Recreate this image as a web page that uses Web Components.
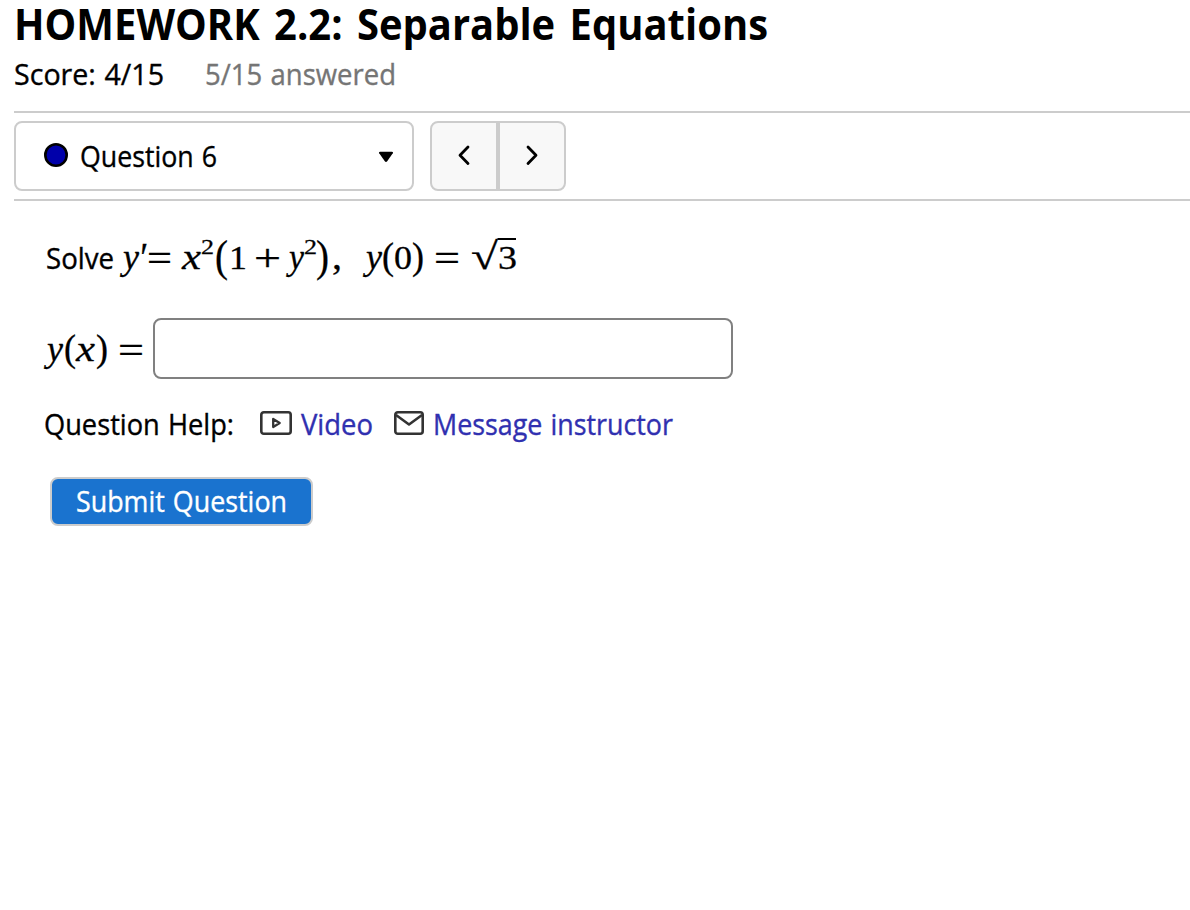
<!DOCTYPE html>
<html lang="en">
<head>
<meta charset="utf-8">
<title>HOMEWORK 2.2: Separable Equations</title>
<style>
	html, body {
		margin: 0;
		background: #fff;
	}
	body {
		font-family: "Trebuchet MS", "Open Sans", sans-serif;
		font-size: 28.5px;
		color: #000;
	}
</style>
</head>
<body>
<homework-page></homework-page>

<script>
// Text set to a given width
class FitText extends HTMLElement {
	constructor() {
		super();
		const shadow = this.attachShadow({ mode: 'open' });
		shadow.innerHTML = `
			<style>
				:host {
					display: block;
					white-space: nowrap;
					line-height: 36px;
					word-spacing: .04em;
					-webkit-text-stroke: .35px currentColor;
				}
				span { display: inline-block; transform-origin: 0 50%; }
			</style>
			<span><slot></slot></span>
		`;
		this.textElement = shadow.querySelector('span');
	}

	connectedCallback() {
		const width = Number(this.getAttribute('width'));
		this.style.width = width + 'px';
		const natural = this.textElement.getBoundingClientRect().width;
		this.textElement.style.transform = `translateY(.3px) scaleX(${width / natural})`;
	}
}


// Score line and title
class HomeworkHeader extends HTMLElement {
	constructor() {
		super();
		const shadow = this.attachShadow({ mode: 'open' });
		shadow.innerHTML = `
			<style>
				:host { display: block; height: 111px; border-bottom: 2px solid #ccc; }
				h1 { margin: 0; height: 47px; font-size: 42.5px; font-weight: 700; }
				h1 fit-text { line-height: 47px; word-spacing: .1em; -webkit-text-stroke: 0; }
				.score { display: flex; gap: 41px; margin-top: 9px; }
				.answered { color: #757575; }
			</style>
			<h1><fit-text width="754">HOMEWORK 2.2: Separable Equations</fit-text></h1>
			<div class="score">
				<fit-text width="150">Score: 4/15</fit-text>
				<fit-text class="answered" width="191">5/15 answered</fit-text>
			</div>
		`;
	}
}


// Question picker with previous / next
class QuestionNav extends HTMLElement {
	constructor() {
		super();
		const shadow = this.attachShadow({ mode: 'open' });
		shadow.innerHTML = `
			<style>
				:host {
					display: flex;
					gap: 16px;
					padding: 8px 0;
					border-bottom: 2px solid #ccc;
				}
				.select {
					display: flex;
					align-items: center;
					box-sizing: border-box;
					width: 400px;
					height: 70px;
					padding: 0 18px 0 28px;
					border: 2px solid #ccc;
					border-radius: 8px;
				}
				.dot { margin: -2px 12px 0 0; }
				.caret { margin: 1px 0 0 auto; }
				.buttons { display: flex; }
				button {
					display: flex;
					align-items: center;
					justify-content: center;
					width: 68px;
					height: 70px;
					padding: 0 0 2px;
					border: 2px solid #ccc;
					border-radius: 8px 0 0 8px;
					background: #f8f8f8;
				}
				button + button { border-radius: 0 8px 8px 0; }
				svg { display: block; flex: none; }
			</style>
			<div class="select">
				<svg class="dot" width="24" height="24"><circle cx="12" cy="12" r="10.7" fill="#0000aa" stroke="#000" stroke-width="2.6"/></svg>
				<fit-text width="137">Question 6</fit-text>
				<svg class="caret" width="16" height="12"><path d="M2 .8H14Q15.7 .8 14.8 2.3L9.2 10.2Q8 11.8 6.8 10.2L1.2 2.3Q.3 .8 2 .8Z"/></svg>
			</div>
			<div class="buttons">
				<button aria-label="Previous question">
					<svg width="20" height="24" fill="none" stroke="#000" stroke-width="2.8" stroke-linecap="round" stroke-linejoin="round"><path d="M14 4L6 12.2L14 20.4"/></svg>
				</button>
				<button aria-label="Next question">
					<svg width="20" height="24" fill="none" stroke="#000" stroke-width="2.8" stroke-linecap="round" stroke-linejoin="round"><path d="M6 4L14 12.2L6 20.4"/></svg>
				</button>
			</div>
		`;
	}
}


// Typeset formula. Each glyph: text, left, baseline, width, size, style
const FORMULAS = {
	problem: {
		width: 400,
		glyphs: [
			['y', 1, 39, 16, 35, 'italic'],
			['′', 16, 42, 8, 42, 'italic'],
			['=', 25, 41, 25, 37],
			['x', 60, 39, 19, 36, 'italic'],
			['2', 79, 24, 13, 22],
			['(', 93, 41, 13, 44],
			['1', 107, 39, 18, 34],
			['+', 132, 41, 27, 38],
			['y', 167, 39, 15, 35, 'italic'],
			['2', 182, 24, 13, 22],
			[')', 194, 41, 13, 44],
			[',', 210, 39, 10, 38],
			['y', 244, 39, 16, 35, 'italic'],
			['(', 260, 39, 12, 37],
			['0', 272, 39, 18, 34],
			[')', 290, 39, 12, 37],
			['=', 312, 41, 26, 37],
			['√', 349, 39, 27, 38],
			['3', 376, 39, 19, 34]
		],
		bar: 'M375.5 9H394'
	},
	answer: {
		width: 107,
		glyphs: [
			['y', 1, 39, 16, 35, 'italic'],
			['(', 18, 39, 12, 37],
			['x', 30, 39, 19, 36, 'italic'],
			[')', 50, 39, 12, 37],
			['=', 72, 41, 26, 37]
		]
	}
};

class MathFormula extends HTMLElement {
	constructor() {
		super();
		this.attachShadow({ mode: 'open' });
	}

	connectedCallback() {
		const formula = FORMULAS[this.getAttribute('name')];
		const glyphs = formula.glyphs.map(([text, x, y, width, size, style = 'normal']) =>
			`<text x="${x}" y="${y}" font-size="${size}" font-style="${style}" textLength="${width}" lengthAdjust="spacingAndGlyphs">${text}</text>`
		).join('');
		this.shadowRoot.innerHTML = `
			<style>
				:host { display: block; }
				svg { display: block; overflow: visible; font-family: "Liberation Serif", serif; }
				text { stroke: #000; stroke-width: .3px; }
			</style>
			<svg width="${formula.width}" height="56">
				${glyphs}
				${formula.bar ? `<path d="${formula.bar}" stroke="#000" stroke-width="2"/>` : ''}
			</svg>
		`;
	}
}


// Icon followed by a link
const ICONS = {
	video: `<svg width="32" height="26" fill="none" stroke="#333" stroke-width="2.6" stroke-linejoin="round"><rect x="1.3" y="2.3" width="29.4" height="21.4" rx="2.5"/><path d="M13.2 9L19.7 13L13.2 17Z" stroke-width="2.3"/></svg>`,
	mail: `<svg width="30" height="26" fill="none" stroke="#333" stroke-width="2.6" stroke-linejoin="round"><rect x="1.3" y="2.3" width="27.4" height="21.4" rx="2.5"/><path d="M2 5L15 14.5L28 5"/></svg>`
};

class HelpLink extends HTMLElement {
	constructor() {
		super();
		this.attachShadow({ mode: 'open' });
	}

	connectedCallback() {
		this.shadowRoot.innerHTML = `
			<style>
				:host { display: flex; align-items: center; gap: 9px; }
				svg { display: block; margin-top: -3px; }
				fit-text { color: #3030b0; }
			</style>
			${ICONS[this.getAttribute('icon')]}
			<fit-text width="${this.getAttribute('width')}"><slot></slot></fit-text>
		`;
	}
}


// Question body
class QuestionBody extends HTMLElement {
	constructor() {
		super();
		const shadow = this.attachShadow({ mode: 'open' });
		shadow.innerHTML = `
			<style>
				:host { display: block; padding: 29px 0 0 30px; }
				.row { display: flex; align-items: center; }
				.problem { height: 56px; padding-left: 2px; gap: 8px; }
				.answer { margin-top: 32px; height: 61px; padding-left: 2px; }
				input {
					box-sizing: border-box;
					width: 580px;
					height: 61px;
					margin: 0;
					border: 2px solid #808080;
					border-radius: 8px;
					background: #fff;
				}
				.answer math-formula { margin-top: 3px; }
				.help { margin-top: 27px; height: 36px; }
				.help help-link:first-of-type { margin: 0 21px 0 26px; }
				button {
					display: flex;
					align-items: center;
					justify-content: center;
					box-sizing: border-box;
					width: 263px;
					height: 49px;
					margin: 35px 0 0 6px;
					padding: 0 0 2px;
					border: 2px solid #ccc;
					border-radius: 8px;
					background: #1a73cf;
					color: #fff;
					font: inherit;
				}
			</style>
			<div class="row problem">
				<fit-text width="68">Solve</fit-text>
				<math-formula name="problem"></math-formula>
			</div>
			<div class="row answer">
				<math-formula name="answer"></math-formula>
				<input type="text" aria-label="y(x)">
			</div>
			<div class="row help">
				<fit-text width="190">Question Help:</fit-text>
				<help-link icon="video" width="72">Video</help-link>
				<help-link icon="mail" width="240">Message instructor</help-link>
			</div>
			<button><fit-text width="211">Submit Question</fit-text></button>
		`;
	}
}


class HomeworkPage extends HTMLElement {
	constructor() {
		super();
		const shadow = this.attachShadow({ mode: 'open' });
		shadow.innerHTML = `
			<style>
				:host { display: block; padding-left: 14px; }
			</style>
			<homework-header></homework-header>
			<question-nav></question-nav>
			<question-body></question-body>
		`;
	}
}

customElements.define('fit-text', FitText);
customElements.define('homework-header', HomeworkHeader);
customElements.define('question-nav', QuestionNav);
customElements.define('math-formula', MathFormula);
customElements.define('help-link', HelpLink);
customElements.define('question-body', QuestionBody);
customElements.define('homework-page', HomeworkPage);
</script>
</body>
</html>
